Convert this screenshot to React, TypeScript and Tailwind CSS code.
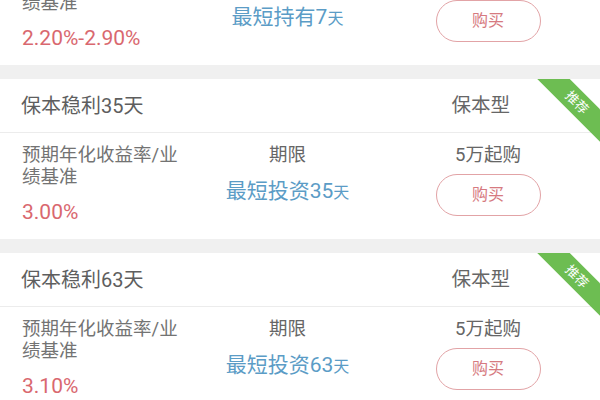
import React from 'react';

interface Product {
  title: string;
  rate: string;
  term: React.ReactNode;
  recommended?: boolean;
}

const products: Product[] = [
  { title: '保本稳利7天', rate: '2.20%-2.90%', term: <>最短持有7<span className="text-[16px]">天</span></> },
  { title: '保本稳利35天', rate: '3.00%', term: <>最短投资35<span className="text-[16px]">天</span></>, recommended: true },
  { title: '保本稳利63天', rate: '3.10%', term: <>最短投资63<span className="text-[16px]">天</span></>, recommended: true },
];

const ProductCard: React.FC<{ p: Product }> = ({ p }) => (
  <div className="relative overflow-hidden bg-white">
    {p.recommended && (
      <div className="absolute top-[12px] right-[-27px] w-[100px] h-[23px] rotate-45 bg-[#6dbd52] flex items-center justify-center text-white text-[13px] leading-none">
        推荐
      </div>
    )}
    {/* header */}
    <div className="h-[54px] flex items-center pl-[21px] border-b border-[#ececec]">
      <span className="text-[20px] text-[#5e5e5e]">{p.title}</span>
      <span className="ml-auto mr-[90px] text-[19.5px] text-[#666]">保本型</span>
    </div>
    {/* body */}
    <div className="h-[106px] flex pt-[11px]">
      <div className="w-[215px] pl-[22px] flex flex-col">
        <span className="text-[18.5px] leading-[22px] text-[#737373]">预期年化收益率/业</span>
        <span className="text-[18.5px] leading-[22px] text-[#737373]">绩基准</span>
        <span className="mt-[12px] text-[21px] leading-[24px] text-[#d9686f]">{p.rate}</span>
      </div>
      <div className="w-[145px] flex flex-col items-center">
        <span className="text-[18.5px] leading-[22px] text-[#666]">期限</span>
        <span className="mt-[12px] text-[21px] leading-[26px] text-[#5b9cc6] whitespace-nowrap">{p.term}</span>
      </div>
      <div className="ml-[75px] w-[106px] flex flex-col items-center">
        <span className="text-[18.5px] leading-[22px] text-[#666]">5万起购</span>
        <button className="mt-[8px] w-[105px] h-[42px] rounded-full border-[1.5px] border-[#e2a3a6] text-[16px] text-[#d67a80] bg-white">
          购买
        </button>
      </div>
    </div>
  </div>
);

export default function App() {
  return (
    <div
      className="w-[600px] h-[400px] overflow-hidden bg-[#f0f0f0]"
      style={{ fontFamily: 'Roboto, "Noto Sans CJK SC", sans-serif' }}
    >
      <div className="-mt-[95px] flex flex-col gap-[14px]">
        {products.map((p) => (
          <ProductCard key={p.title} p={p} />
        ))}
      </div>
    </div>
  );
}
